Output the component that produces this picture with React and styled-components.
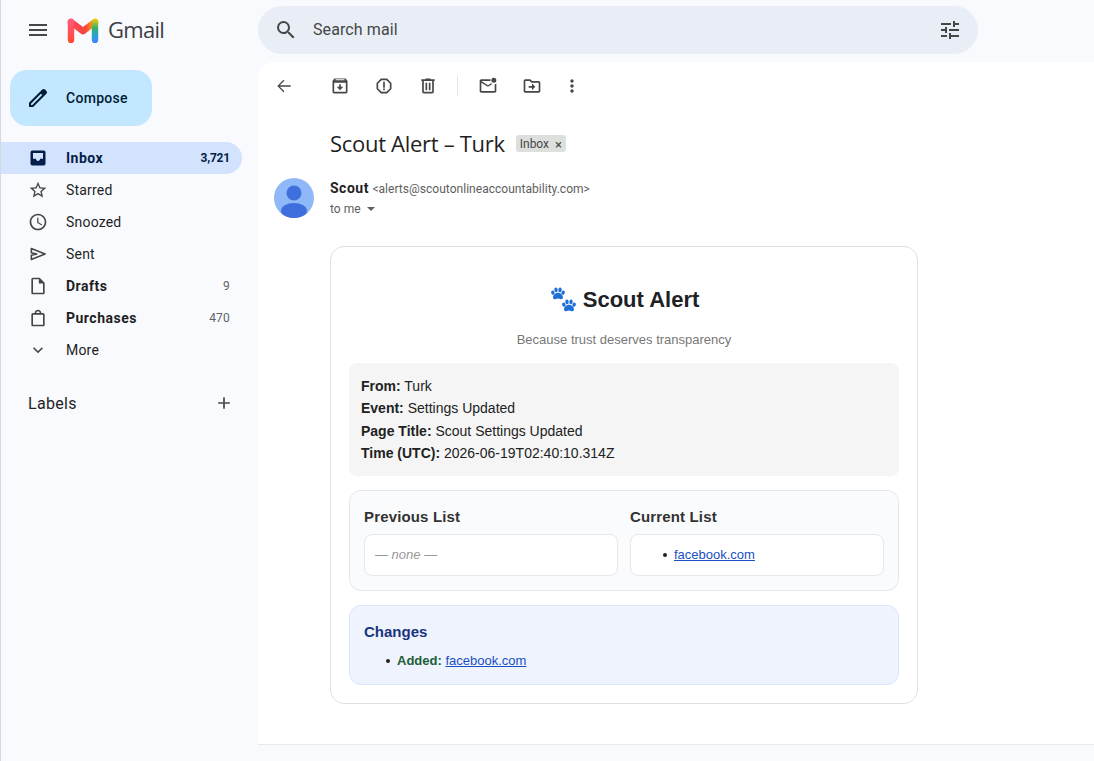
import React from "react";
import styled, { createGlobalStyle } from "styled-components";

const GlobalStyle = createGlobalStyle`
  html, body {
    margin: 0;
    height: 100%;
    background: #f8fafd;
    overflow: hidden;
  }
  * { box-sizing: border-box; }
`;

const Icon = ({ size = 20, children, ...rest }) => (
  <svg width={size} height={size} viewBox="0 0 24 24" fill="currentColor" {...rest}>
    {children}
  </svg>
);

const GmailLogo = () => (
  <svg width="32" height="26" viewBox="0 0 32 26">
    <defs>
      <linearGradient id="leftStem" gradientUnits="userSpaceOnUse" x1="4" y1="3" x2="4" y2="25">
        <stop offset="0" stopColor="#ff5a7a" />
        <stop offset="1" stopColor="#ff4b33" />
      </linearGradient>
      <linearGradient id="rightStem" gradientUnits="userSpaceOnUse" x1="28" y1="2" x2="28" y2="25">
        <stop offset="0" stopColor="#fbc707" />
        <stop offset="0.4" stopColor="#2fb36a" />
        <stop offset="0.75" stopColor="#2f9fd8" />
        <stop offset="1" stopColor="#3d86fb" />
      </linearGradient>
      <linearGradient id="midBand" gradientUnits="userSpaceOnUse" x1="4" y1="0" x2="28" y2="0">
        <stop offset="0" stopColor="#ff4a5a" />
        <stop offset="0.6" stopColor="#f4453c" />
        <stop offset="0.85" stopColor="#fb8c16" />
        <stop offset="1" stopColor="#fbc707" />
      </linearGradient>
    </defs>
    <path d="M4 5l12 9.2L28 5" fill="none" stroke="url(#midBand)" strokeWidth="6.6" strokeLinecap="round" strokeLinejoin="round" />
    <path d="M4 23V5" fill="none" stroke="url(#leftStem)" strokeWidth="6.4" strokeLinecap="round" />
    <path d="M28 23V5" fill="none" stroke="url(#rightStem)" strokeWidth="6.4" strokeLinecap="round" />
  </svg>
);

const PawPrint = ({ x, y }) => (
  <g transform={`translate(${x} ${y})`}>
    <path d="M7 5.2c2.4 0 5 2.3 5 4.500 0 1.500-1.200 2.100-2.400 2-1-.1-1.700-.6-2.600-.6s-1.700.5-2.600.6c-1.200.1-2.400-.5-2.400-2 0-2.200 2.600-4.500 5-4.500z" />
    <ellipse cx="1.9" cy="5.2" rx="1.7" ry="2.1" transform="rotate(-24 1.9 5.2)" />
    <ellipse cx="5" cy="2.4" rx="1.7" ry="2.3" transform="rotate(-8 5 2.4)" />
    <ellipse cx="9" cy="2.4" rx="1.7" ry="2.3" transform="rotate(8 9 2.4)" />
    <ellipse cx="12.1" cy="5.2" rx="1.7" ry="2.1" transform="rotate(24 12.1 5.2)" />
  </g>
);

const PawIcon = () => (
  <svg width="28" height="26" viewBox="0 0 28 26" fill="#1f6fd6">
    <PawPrint x={2} y={0.5} />
    <PawPrint x={13} y={12.5} />
  </svg>
);

const navItems = [
  { label: "Inbox", count: "3,721", active: true, bold: true, icon: "M19 3H5a2 2 0 0 0-2 2v14a2 2 0 0 0 2 2h14a2 2 0 0 0 2-2V5a2 2 0 0 0-2-2zm-1 10h-3.500c0 1.400-1.100 2.500-2.500 2.500S9.500 14.400 9.500 13H6V6h12v7z" },
  { label: "Starred", icon: "M22 9.24l-7.19-.62L12 2 9.19 8.63 2 9.24l5.46 4.73L5.82 21 12 17.27 18.18 21l-1.63-7.03L22 9.24zM12 15.4l-3.76 2.27 1-4.28-3.32-2.88 4.38-.38L12 6.1l1.71 4.04 4.38.38-3.32 2.88 1 4.28L12 15.4z" },
  { label: "Snoozed", icon: "M11.99 2C6.47 2 2 6.48 2 12s4.47 10 9.99 10C17.52 22 22 17.52 22 12S17.52 2 11.99 2zM12 20c-4.42 0-8-3.58-8-8s3.58-8 8-8 8 3.58 8 8-3.58 8-8 8zm.5-13H11v6l5.25 3.15.75-1.23-4.5-2.67V7z" },
  { label: "Sent", outline: true, icon: "M4 5.500 20.500 12 4 18.500V13.500L10.500 12 4 10.500z" },
  { label: "Drafts", bold: true, count: "9", icon: "M14 2H6c-1.100 0-2 .9-2 2v16c0 1.100.9 2 2 2h12c1.100 0 2-.9 2-2V8l-6-6zm4 18H6V4h7v5h5v11z" },
  { label: "Purchases", bold: true, count: "470", icon: "M18 6h-2c0-2.210-1.790-4-4-4S8 3.790 8 6H6c-1.100 0-2 .9-2 2v12c0 1.100.9 2 2 2h12c1.100 0 2-.9 2-2V8c0-1.100-.9-2-2-2zm-6-2c1.100 0 2 .9 2 2h-4c0-1.100.9-2 2-2zm6 16H6V8h12v12z" },
  { label: "More", icon: "M7.41 8.59 12 13.17l4.59-4.58L18 10l-6 6-6-6z" },
];

const toolIcons = {
  back: "M20 11.200H6.900l5.600-5.600L11.400 4.500 4 12l7.400 7.400 1.100-1.100-5.600-5.500H20z",
  archive: "M20.54 5.23 19.15 3.55C18.88 3.21 18.47 3 18 3H6c-.47 0-.88.21-1.16.55L3.46 5.23C3.17 5.57 3 6.02 3 6.5V19c0 1.1.9 2 2 2h14c1.1 0 2-.9 2-2V6.5c0-.48-.17-.93-.46-1.27zM5 19V8h14v11H5zM6.24 5l.81-1h9.9l.93 1H6.24zM13 10h-2v3H8l4 4 4-4h-3v-3z",
  report: "M15.73 3H8.27L3 8.27v7.46L8.27 21h7.46L21 15.73V8.27L15.73 3zM19 14.9 14.9 19H9.1L5 14.9V9.1L9.1 5h5.8L19 9.1v5.8zM11 7h2v7h-2V7zm0 8h2v2h-2v-2z",
  trash: "M15 4V3H9v1H4v2h1v13c0 1.1.9 2 2 2h10c1.1 0 2-.9 2-2V6h1V4h-5zm2 15H7V6h10v13zM9 8h2v9H9V8zm4 0h2v9h-2V8z",
  unread: "M22 8.98V18c0 1.1-.9 2-2 2H4c-1.1 0-2-.9-2-2V6c0-1.1.9-2 2-2h11.1c-.06.32-.1.66-.1 1s.04.68.1 1H4l8 5 3.67-2.29c.47.43 1.02.76 1.63.98L12 13 4 8v10h16V9.9c.74-.15 1.42-.48 2-.92zM19 2a3 3 0 1 0 0 6 3 3 0 0 0 0-6z",
  move: "M20 6h-8l-2-2H4c-1.1 0-2 .9-2 2v12c0 1.1.9 2 2 2h16c1.1 0 2-.9 2-2V8c0-1.1-.9-2-2-2zm0 12H4V6h5.17l2 2H20v10zm-8-1 4-4-4-4v3H8v2h4v3z",
  more: "M12 8c1.1 0 2-.9 2-2s-.9-2-2-2-2 .9-2 2 .9 2 2 2zm0 2c-1.1 0-2 .9-2 2s.9 2 2 2 2-.9 2-2-.9-2-2-2zm0 6c-1.1 0-2 .9-2 2s.9 2 2 2 2-.9 2-2-.9-2-2-2z",
};

const App = () => (
  <>
    <GlobalStyle />
    <Page>
      <Sidebar>
        <Brand>
          <MenuButton>
            <Icon size={24}>
              <path d="M3 18h18v-2H3v2zm0-5h18v-2H3v2zm0-7v2h18V6H3z" />
            </Icon>
          </MenuButton>
          <GmailLogo />
          <BrandName>Gmail</BrandName>
        </Brand>
        <Compose>
          <Icon size={24}>
            <path d="M20.41 4.94 19.06 3.59a2 2 0 0 0-2.83 0L3 16.83V21h4.17L20.41 7.77a2 2 0 0 0 0-2.83zM6.34 19H5v-1.34L14.9 7.76l1.34 1.34L6.34 19z" />
          </Icon>
          <span>Compose</span>
        </Compose>
        <Nav>
          {navItems.map((item) => (
            <NavRow key={item.label} $active={item.active} $bold={item.bold}>
              <NavIcon $active={item.active}>
                <Icon size={20}>
                  {item.outline ? (
                    <path d={item.icon} fill="none" stroke="currentColor" strokeWidth="1.900" strokeLinejoin="round" />
                  ) : (
                    <path d={item.icon} />
                  )}
                </Icon>
              </NavIcon>
              <NavLabel>{item.label}</NavLabel>
              {item.count && <NavCount $active={item.active}>{item.count}</NavCount>}
            </NavRow>
          ))}
        </Nav>
        <Labels>
          <span>Labels</span>
          <Icon size={20}>
            <path d="M19 13h-6v6h-2v-6H5v-2h6V5h2v6h6v2z" />
          </Icon>
        </Labels>
      </Sidebar>
      <Column>
        <SearchRow>
          <SearchBar>
            <Icon size={24}>
              <path d="M15.5 14h-.79l-.28-.27A6.47 6.47 0 0 0 16 9.5 6.5 6.5 0 1 0 9.5 16c1.61 0 3.09-.59 4.23-1.57l.27.28v.79l5 4.99L20.49 19l-4.99-5zm-6 0C7.01 14 5 11.99 5 9.5S7.01 5 9.5 5 14 7.01 14 9.5 11.99 14 9.5 14z" />
            </Icon>
            <SearchText>Search mail</SearchText>
            <Icon size={24}>
              <path d="M3 17v2h6v-2H3zM3 5v2h10V5H3zm10 16v-2h8v-2h-8v-2h-2v6h2zM7 9v2H3v2h4v2h2V9H7zm14 4v-2H11v2h10zm-6-4h2V7h4V5h-4V3h-2v6z" />
            </Icon>
          </SearchBar>
        </SearchRow>
        <Main>
          <Toolbar>
            <ToolButton><Icon size={20}><path d={toolIcons.back} /></Icon></ToolButton>
            <ToolGroup>
              <ToolButton><Icon size={20}><path d={toolIcons.archive} /></Icon></ToolButton>
              <ToolButton><Icon size={20}><path d={toolIcons.report} /></Icon></ToolButton>
              <ToolButton><Icon size={20}><path d={toolIcons.trash} /></Icon></ToolButton>
            </ToolGroup>
            <ToolDivider />
            <ToolGroup>
              <ToolButton><Icon size={20}><path d={toolIcons.unread} /></Icon></ToolButton>
              <ToolButton><Icon size={20}><path d={toolIcons.move} /></Icon></ToolButton>
              <SmallTool><Icon size={20}><path d={toolIcons.more} /></Icon></SmallTool>
            </ToolGroup>
          </Toolbar>
          <Message>
            <SubjectRow>
              <Subject>Scout Alert – Turk</Subject>
              <InboxChip>Inbox <span>×</span></InboxChip>
            </SubjectRow>
            <SenderRow>
              <Avatar>
                <svg width="40" height="40" viewBox="0 0 40 40">
                  <defs>
                    <clipPath id="avatarClip">
                      <circle cx="20" cy="20" r="20" />
                    </clipPath>
                  </defs>
                  <circle cx="20" cy="20" r="20" fill="#8fb8f9" />
                  <g clipPath="url(#avatarClip)" fill="#3f6fdc">
                    <circle cx="20" cy="15" r="7.500" />
                    <ellipse cx="20" cy="33" rx="13" ry="8" />
                  </g>
                </svg>
              </Avatar>
              <SenderMeta>
                <SenderLine>
                  <strong>Scout</strong> <small>&lt;alerts@scoutonlineaccountability.com&gt;</small>
                </SenderLine>
                <ToMe>to me <Caret /></ToMe>
              </SenderMeta>
            </SenderRow>
            <Card>
              <CardTitle><PawIcon /> Scout Alert</CardTitle>
              <CardTagline>Because trust deserves transparency</CardTagline>
              <InfoBox>
                <div><b>From:</b> Turk</div>
                <div><b>Event:</b> Settings Updated</div>
                <div><b>Page Title:</b> Scout Settings Updated</div>
                <div><b>Time (UTC):</b> 2026-06-19T02:40:10.314Z</div>
              </InfoBox>
              <ListsBox>
                <ListColumn>
                  <ListHeading>Previous List</ListHeading>
                  <ListBody><NoneText>— none —</NoneText></ListBody>
                </ListColumn>
                <ListColumn>
                  <ListHeading>Current List</ListHeading>
                  <ListBody>
                    <BulletList><li><MailLink href="#">facebook.com</MailLink></li></BulletList>
                  </ListBody>
                </ListColumn>
              </ListsBox>
              <ChangesBox>
                <ChangesHeading>Changes</ChangesHeading>
                <BulletList>
                  <li><Added>Added:</Added> <MailLink href="#">facebook.com</MailLink></li>
                </BulletList>
              </ChangesBox>
            </Card>
          </Message>
        </Main>
      </Column>
    </Page>
  </>
);

export default App;

const Page = styled.div`
  display: flex;
  width: 1094px;
  height: 761px;
  overflow: hidden;
  background: #f8fafd;
  border-left: 1px solid #d5d8de;
  font-family: Roboto, "Liberation Sans", sans-serif;
  color: #1f1f1f;
`;

const Sidebar = styled.aside`
  width: 257px;
  flex: none;
`;

const Brand = styled.div`
  display: flex;
  align-items: center;
  height: 60px;
  padding-left: 25px;
`;

const MenuButton = styled.div`
  display: flex;
  color: #444746;
  margin-right: 17px;
`;

const BrandName = styled.span`
  margin-left: 9px;
  padding-bottom: 3px;
  font-family: "Open Sans", Roboto, sans-serif;
  font-size: 22px;
  letter-spacing: -0.7px;
  color: #3c4043;
`;

const Compose = styled.div`
  display: flex;
  align-items: center;
  gap: 16px;
  width: 142px;
  height: 56px;
  margin: 10px 0 16px 9px;
  padding-left: 16px;
  border-radius: 17px;
  background: #c2e7ff;
  color: #001d35;
  font-size: 14px;
  font-weight: 500;
  letter-spacing: 0.3px;
`;

const Nav = styled.nav`
  display: flex;
  flex-direction: column;
`;

const NavRow = styled.div`
  display: flex;
  align-items: center;
  width: 241px;
  height: 32px;
  padding: 0 12px 0 27px;
  border-radius: 0 16px 16px 0;
  font-size: 14px;
  font-weight: ${({ $bold }) => ($bold ? 700 : 400)};
  letter-spacing: ${({ $bold }) => ($bold ? "0.5px" : "0.2px")};
  background: ${({ $active }) => ($active ? "#d3e3fd" : "transparent")};
  color: ${({ $active }) => ($active ? "#041e49" : "#1f1f1f")};
`;

const NavIcon = styled.span`
  display: flex;
  width: 20px;
  margin-right: 18px;
  color: ${({ $active }) => ($active ? "#041e49" : "#444746")};
`;

const NavLabel = styled.span`
  flex: 1;
`;

const NavCount = styled.span`
  font-size: 12px;
  letter-spacing: ${({ $active }) => ($active ? "-0.2px" : "0.2px")};
  font-weight: ${({ $active }) => ($active ? 700 : 400)};
  color: ${({ $active }) => ($active ? "#041e49" : "#5f6368")};
`;

const Labels = styled.div`
  display: flex;
  align-items: center;
  justify-content: space-between;
  width: 241px;
  margin-top: 21px;
  height: 32px;
  padding: 0 8px 0 27px;
  font-size: 16px;
  letter-spacing: 0.3px;
  color: #1f1f1f;
  svg { color: #444746; }
`;

const Column = styled.div`
  flex: 1;
  display: flex;
  flex-direction: column;
  min-width: 0;
`;

const SearchRow = styled.div`
  height: 62px;
  padding-top: 6px;
`;

const SearchBar = styled.div`
  display: flex;
  align-items: center;
  width: 720px;
  height: 48px;
  padding: 0 16px;
  border-radius: 24px;
  background: #e9eef6;
  color: #444746;
`;

const SearchText = styled.span`
  flex: 1;
  margin-left: 15px;
  padding-bottom: 2px;
  font-size: 16px;
  letter-spacing: 0.1px;
`;

const Main = styled.main`
  height: 683px;
  background: #fff;
  border-top-left-radius: 16px;
  border-bottom: 1px solid #e8eaed;
`;

const Toolbar = styled.div`
  display: flex;
  align-items: center;
  height: 48px;
  padding: 0 0 0 16px;
`;

const ToolButton = styled.span`
  display: flex;
  justify-content: center;
  width: 20px;
  color: #444746;
  & + & { margin-left: 24px; }
`;

const SmallTool = styled(ToolButton)`
  && { margin-left: 20px; }
`;

const ToolGroup = styled.div`
  display: flex;
  margin-left: 36px;
`;

const ToolDivider = styled.span`
  width: 1px;
  height: 20px;
  margin: 0 20px 0 19px;
  background: #e3e5e8;
  & + ${ToolGroup} { margin-left: 0; }
`;

const Message = styled.div`
  padding: 10px 0 0 72px;
`;

const SubjectRow = styled.div`
  display: flex;
  align-items: center;
  height: 28px;
  margin-top: 9px;
`;

const Subject = styled.h1`
  margin: 0;
  font-family: "Open Sans", Roboto, sans-serif;
  font-size: 22px;
  font-weight: 400;
  letter-spacing: -0.3px;
  color: #1f1f1f;
`;

const InboxChip = styled.span`
  display: flex;
  align-items: center;
  gap: 6px;
  height: 17px;
  margin-left: 11px;
  padding: 2px 4px 0;
  border-radius: 3px;
  background: #dddfdd;
  font-size: 12px;
  color: #444746;
  span { font-size: 13px; }
`;

const SenderRow = styled.div`
  display: flex;
  margin: 21px 0 0 -56px;
`;

const Avatar = styled.div`
  width: 40px;
  height: 40px;
  margin-right: 16px;
  svg { display: block; }
`;

const SenderMeta = styled.div`
  display: flex;
  flex-direction: column;
`;

const SenderLine = styled.div`
  height: 20px;
  line-height: 20px;
  font-size: 14px;
  strong { font-weight: 700; letter-spacing: 0.5px; color: #1f1f1f; }
  small { font-size: 12px; letter-spacing: 0.03px; color: #5e5e5e; }
`;

const ToMe = styled.div`
  display: flex;
  align-items: center;
  height: 20px;
  margin-top: 1px;
  font-size: 12px;
  color: #5e5e5e;
`;

const Caret = styled.span`
  width: 0;
  height: 0;
  margin: 0 0 0 6px;
  border-left: 4px solid transparent;
  border-right: 4px solid transparent;
  border-top: 4px solid #5e5e5e;
`;

const Card = styled.div`
  width: 588px;
  height: 458px;
  margin-top: 27px;
  padding: 37px 18px 18px;
  border: 1px solid #e0e0e0;
  border-radius: 14px;
  font-family: "Liberation Sans", Arial, sans-serif;
  color: #222;
`;

const CardTitle = styled.h2`
  display: flex;
  align-items: center;
  justify-content: center;
  gap: 6px;
  height: 32px;
  margin: 0;
  font-size: 22px;
  font-weight: 700;
  color: #202124;
`;

const CardTagline = styled.p`
  margin: 16px 0 15px;
  height: 16px;
  line-height: 16px;
  text-align: center;
  font-size: 13px;
  color: #777;
`;

const InfoBox = styled.div`
  height: 113px;
  padding: 11.750px 12px 0;
  border-radius: 8px;
  background: #f5f5f5;
  font-size: 14px;
  line-height: 22.500px;
`;

const ListsBox = styled.div`
  display: grid;
  grid-template-columns: 1fr 1fr;
  gap: 12px;
  height: 101px;
  margin-top: 14px;
  padding: 14px;
  border: 1px solid #e5e7eb;
  border-radius: 12px;
  background: #fafbfc;
`;

const ListColumn = styled.div`
  display: flex;
  flex-direction: column;
`;

const ListHeading = styled.div`
  height: 20px;
  margin: 3px 0 6px;
  line-height: 18px;
  font-size: 15px;
  font-weight: 700;
  letter-spacing: 0.15px;
  color: #333;
`;

const ListBody = styled.div`
  display: flex;
  align-items: center;
  height: 42px;
  padding: 0 10px 1px;
  border: 1px solid #e5e7eb;
  border-radius: 8px;
  background: #fff;
`;

const NoneText = styled.em`
  font-size: 13px;
  color: #999;
`;

const BulletList = styled.ul`
  margin: 0;
  padding-left: 33px;
  list-style: none;
  font-size: 13px;
  li::before {
    content: "";
    display: inline-block;
    width: 4px;
    height: 4px;
    margin: 0 7px 2px -11px;
    border-radius: 50%;
    background: #222;
    vertical-align: middle;
  }
`;

const MailLink = styled.a`
  color: #1a4fc4;
`;

const ChangesBox = styled.div`
  height: 80px;
  margin-top: 14px;
  padding: 17px 14px 0;
  border: 1px solid #dbe6fb;
  border-radius: 12px;
  background: #eef3fd;
  ${BulletList} { margin-top: 12px; }
`;

const ChangesHeading = styled.div`
  line-height: 18px;
  font-size: 15px;
  font-weight: 700;
  color: #1a337e;
`;

const Added = styled.b`
  color: #1c5e38;
`;
